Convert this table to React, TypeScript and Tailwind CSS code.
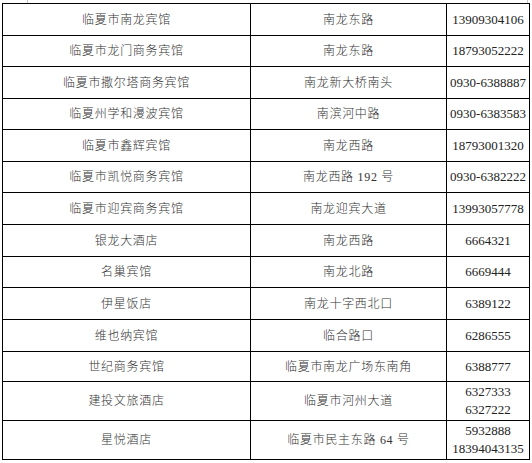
type Row = {
  name: string;
  addr: string;
  phone: string[];
  h: string;
};

const ROWS: Row[] = [
  { name: "临夏市南龙宾馆", addr: "南龙东路", phone: ["13909304106"], h: "h-[32px]" },
  { name: "临夏市龙门商务宾馆", addr: "南龙东路", phone: ["18793052222"], h: "h-[31px]" },
  { name: "临夏市撒尔塔商务宾馆", addr: "南龙新大桥南头", phone: ["0930-6388887"], h: "h-[32px]" },
  { name: "临夏州学和漫波宾馆", addr: "南滨河中路", phone: ["0930-6383583"], h: "h-[31px]" },
  { name: "临夏市鑫辉宾馆", addr: "南龙西路", phone: ["18793001320"], h: "h-[32px]" },
  { name: "临夏市凯悦商务宾馆", addr: "南龙西路 192 号", phone: ["0930-6382222"], h: "h-[31px]" },
  { name: "临夏市迎宾商务宾馆", addr: "南龙迎宾大道", phone: ["13993057778"], h: "h-[32px]" },
  { name: "银龙大酒店", addr: "南龙西路", phone: ["6664321"], h: "h-[32px]" },
  { name: "名巢宾馆", addr: "南龙北路", phone: ["6669444"], h: "h-[31px]" },
  { name: "伊星饭店", addr: "南龙十字西北口", phone: ["6389122"], h: "h-[32px]" },
  { name: "维也纳宾馆", addr: "临合路口", phone: ["6286555"], h: "h-[32px]" },
  { name: "世纪商务宾馆", addr: "临夏市南龙广场东南角", phone: ["6388777"], h: "h-[30px]" },
  { name: "建投文旅酒店", addr: "临夏市河州大道", phone: ["6327333", "6327222"], h: "h-[39px]" },
  { name: "星悦酒店", addr: "临夏市民主东路 64 号", phone: ["5932888", "18394043135"], h: "h-[39px]" },
];

const cell = "flex items-center justify-center border-r border-black text-center";

export default function App() {
  return (
    <div className="w-[532px] h-[463px] bg-white font-['Liberation_Serif','Noto_Sans_CJK_SC',serif] text-[#222]">
      {/* page-margin ticks above the table */}
      <div className="flex h-[3px] justify-between pl-[27px] pr-[4px]">
        <span className="w-px bg-[#c8c8c8]" />
        <span className="w-px bg-[#c8c8c8]" />
      </div>

      <div className="ml-[2px] w-[528px] border-l border-t border-black">
        {ROWS.map((r) => (
          <div key={r.name} className={`flex border-b border-black ${r.h}`}>
            <div className={`${cell} w-[248px] text-[12px] font-light tracking-[0.7px] text-[#333]`}>{r.name}</div>
            <div className={`${cell} w-[196px] text-[12px] font-light tracking-[0.7px] text-[#333]`}>{r.addr}</div>
            <div className={`${cell} w-[83px] flex-col text-[13px] leading-[18px]`}>
              {r.phone.map((p) => (
                <span key={p}>{p}</span>
              ))}
            </div>
          </div>
        ))}
      </div>
    </div>
  );
}
